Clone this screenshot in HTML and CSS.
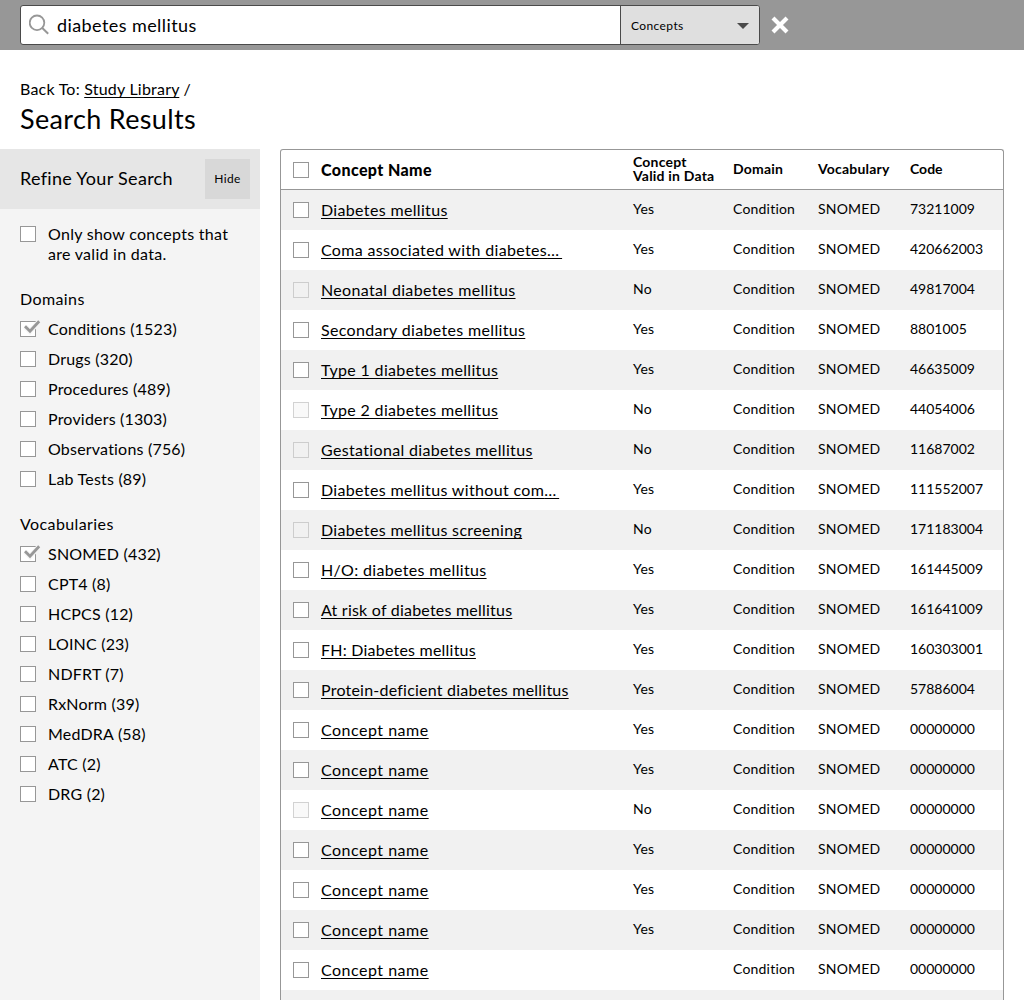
FILE: index.html
```html
<!DOCTYPE html>
<html lang="en">
<head>
<meta charset="utf-8">
<title>Search Results</title>
<link rel="stylesheet" href="styles.css">
</head>
<body>
<header class="topbar">
  <div class="search">
    <div class="field">
      <svg class="glass" width="22" height="22" viewBox="0 0 22 22"><circle cx="8" cy="8.8" r="7.3" fill="none" stroke="#979797" stroke-width="1.8"/><path d="M13 13.8L19.2 19.8" stroke="#979797" stroke-width="2"/></svg>
      <span class="query">diabetes mellitus</span>
    </div>
    <div class="scope"><span>Concepts</span><svg width="12" height="6" viewBox="0 0 12 6"><path d="M0 0H12L6 6Z" fill="#4a4a4a"/></svg></div>
  </div>
  <svg class="clear" width="18" height="18" viewBox="0 0 18 18"><path d="M2 2L16 16M16 2L2 16" stroke="#fff" stroke-width="4.2"/></svg>
</header>
<div class="heading">
  <div class="crumb">Back To: <a class="link">Study Library</a> /</div>
  <h1 class="title">Search Results</h1>
</div>
<div class="content">
  <aside class="sidebar">
    <div class="refine"><h2 class="refine-title">Refine Your Search</h2><div class="hide">Hide</div></div>
    <div class="filters">
      <div class="option two-line"><i class="box"></i><span class="valid-label">Only show concepts that<br>are valid in data.</span></div>
      <h3 class="group">Domains</h3>
      <div class="option"><i class="box"><svg class="tick" width="18" height="15" viewBox="0 0 18 15"><path d="M2 6.5L7 11.5L16 1.5" fill="none" stroke="#f4f4f4" stroke-width="5"/><path d="M2 6.3L7 11.2L16.2 1.3" fill="none" stroke="#979797" stroke-width="2.8"/></svg></i><span>Conditions (1523)</span></div>
      <div class="option"><i class="box"></i><span>Drugs (320)</span></div>
      <div class="option"><i class="box"></i><span>Procedures (489)</span></div>
      <div class="option"><i class="box"></i><span>Providers (1303)</span></div>
      <div class="option"><i class="box"></i><span>Observations (756)</span></div>
      <div class="option"><i class="box"></i><span>Lab Tests (89)</span></div>
      <h3 class="group second">Vocabularies</h3>
      <div class="option"><i class="box"><svg class="tick" width="18" height="15" viewBox="0 0 18 15"><path d="M2 6.5L7 11.5L16 1.5" fill="none" stroke="#f4f4f4" stroke-width="5"/><path d="M2 6.3L7 11.2L16.2 1.3" fill="none" stroke="#979797" stroke-width="2.8"/></svg></i><span>SNOMED (432)</span></div>
      <div class="option"><i class="box"></i><span>CPT4 (8)</span></div>
      <div class="option"><i class="box"></i><span>HCPCS (12)</span></div>
      <div class="option"><i class="box"></i><span>LOINC (23)</span></div>
      <div class="option"><i class="box"></i><span>NDFRT (7)</span></div>
      <div class="option"><i class="box"></i><span>RxNorm (39)</span></div>
      <div class="option"><i class="box"></i><span>MedDRA (58)</span></div>
      <div class="option"><i class="box"></i><span>ATC (2)</span></div>
      <div class="option"><i class="box"></i><span>DRG (2)</span></div>
    </div>
  </aside>
  <main class="table">
    <div class="row head"><i class="box"></i><b class="name">Concept Name</b><span class="stack">Concept<br>Valid in Data</span><span>Domain</span><span>Vocabulary</span><span>Code</span></div>
    <div class="row"><i class="box"></i><a class="name link">Diabetes mellitus</a><span>Yes</span><span>Condition</span><span>SNOMED</span><span>73211009</span></div>
    <div class="row"><i class="box"></i><a class="name link">Coma associated with diabetes<span class="dots">…</span></a><span>Yes</span><span>Condition</span><span>SNOMED</span><span>420662003</span></div>
    <div class="row"><i class="box off"></i><a class="name link">Neonatal diabetes mellitus</a><span>No</span><span>Condition</span><span>SNOMED</span><span>49817004</span></div>
    <div class="row"><i class="box"></i><a class="name link">Secondary diabetes mellitus</a><span>Yes</span><span>Condition</span><span>SNOMED</span><span>8801005</span></div>
    <div class="row"><i class="box"></i><a class="name link">Type 1 diabetes mellitus</a><span>Yes</span><span>Condition</span><span>SNOMED</span><span>46635009</span></div>
    <div class="row"><i class="box off"></i><a class="name link">Type 2 diabetes mellitus</a><span>No</span><span>Condition</span><span>SNOMED</span><span>44054006</span></div>
    <div class="row"><i class="box off"></i><a class="name link">Gestational diabetes mellitus</a><span>No</span><span>Condition</span><span>SNOMED</span><span>11687002</span></div>
    <div class="row"><i class="box"></i><a class="name link">Diabetes mellitus without com<span class="dots">…</span></a><span>Yes</span><span>Condition</span><span>SNOMED</span><span>111552007</span></div>
    <div class="row"><i class="box off"></i><a class="name link">Diabetes mellitus screening</a><span>No</span><span>Condition</span><span>SNOMED</span><span>171183004</span></div>
    <div class="row"><i class="box"></i><a class="name link">H/O: diabetes mellitus</a><span>Yes</span><span>Condition</span><span>SNOMED</span><span>161445009</span></div>
    <div class="row"><i class="box"></i><a class="name link tight">At risk of diabetes mellitus</a><span>Yes</span><span>Condition</span><span>SNOMED</span><span>161641009</span></div>
    <div class="row"><i class="box"></i><a class="name link tight">FH: Diabetes mellitus</a><span>Yes</span><span>Condition</span><span>SNOMED</span><span>160303001</span></div>
    <div class="row"><i class="box"></i><a class="name link tight">Protein-deficient diabetes mellitus</a><span>Yes</span><span>Condition</span><span>SNOMED</span><span>57886004</span></div>
    <div class="row"><i class="box"></i><a class="name link wide">Concept name</a><span>Yes</span><span>Condition</span><span>SNOMED</span><span>00000000</span></div>
    <div class="row"><i class="box"></i><a class="name link wide">Concept name</a><span>Yes</span><span>Condition</span><span>SNOMED</span><span>00000000</span></div>
    <div class="row"><i class="box off"></i><a class="name link wide">Concept name</a><span>No</span><span>Condition</span><span>SNOMED</span><span>00000000</span></div>
    <div class="row"><i class="box"></i><a class="name link wide">Concept name</a><span>Yes</span><span>Condition</span><span>SNOMED</span><span>00000000</span></div>
    <div class="row"><i class="box"></i><a class="name link wide">Concept name</a><span>Yes</span><span>Condition</span><span>SNOMED</span><span>00000000</span></div>
    <div class="row"><i class="box"></i><a class="name link wide">Concept name</a><span>Yes</span><span>Condition</span><span>SNOMED</span><span>00000000</span></div>
    <div class="row"><i class="box"></i><a class="name link wide">Concept name</a><span></span><span>Condition</span><span>SNOMED</span><span>00000000</span></div>
    <div class="row"></div>
  </main>
</div>
</body>
</html>
```
FILE: styles.css
```css
* { box-sizing: border-box; }
body {
  margin: 0;
  height: 1000px;
  overflow: hidden;
  display: flex;
  flex-direction: column;
  background: #fff;
  color: #000;
  font-family: Lato, "Liberation Sans", sans-serif;
  font-size: 16px;
  line-height: 20px;
  white-space: nowrap;
}
h1, h2, h3 { margin: 0; font-weight: 400; }

.topbar {
  flex: none;
  height: 50px;
  padding: 5px 20px;
  display: flex;
  background: #979797;
}
.search {
  width: 740px;
  height: 40px;
  display: flex;
  border: 1px solid #4a4a4a;
  border-radius: 3px;
  background: #fff;
  overflow: hidden;
}
.field { flex: 1; display: flex; align-items: center; padding-left: 8px; }
.glass { margin-right: 6px; }
.query { font-size: 18px; letter-spacing: 0.42px; }
.scope {
  width: 139px;
  display: flex;
  align-items: center;
  justify-content: space-between;
  padding: 2px 10px 0;
  border-left: 1px solid #4a4a4a;
  background: #dfdfdf;
  font-size: 12px;
  letter-spacing: 0.4px;
}
.clear { margin: 11px 0 0 11px; }

.heading { flex: none; height: 99px; padding: 29px 20px 0; }
.crumb { letter-spacing: 0.22px; }
.title { font-size: 27px; line-height: 36px; letter-spacing: 0.35px; padding-top: 2px; }
.link {
  text-decoration: underline;
  text-decoration-thickness: 1px;
  text-underline-offset: 2px;
  text-decoration-skip-ink: none;
}

.content { flex: 1; min-height: 0; display: flex; gap: 20px; }
.sidebar { width: 260px; background: #f4f4f4; }
.refine {
  height: 60px;
  padding: 0 10px 0 20px;
  display: flex;
  align-items: center;
  justify-content: space-between;
  background: #e6e6e6;
}
.refine-title { font-size: 18px; letter-spacing: 0.3px; padding-bottom: 2px; }
.hide {
  width: 45px;
  height: 40px;
  line-height: 40px;
  text-align: center;
  background: #d8d8d8;
  font-size: 12px;
  letter-spacing: 0.4px;
}
.filters { padding: 15px 20px; }
.option { height: 30px; display: flex; align-items: center; gap: 12px; letter-spacing: 0.2px; }
.option span { padding-bottom: 1px; }
.two-line { height: 50px; align-items: flex-start; }
.two-line .box { margin-top: 2px; }
.option .valid-label { letter-spacing: 0.28px; }
.group { font-size: 16px; height: 20px; margin: 15px 0 5px; letter-spacing: 0.4px; }
.group.second { margin-top: 20px; }
.box {
  flex: none;
  position: relative;
  width: 16px;
  height: 16px;
  border: 1px solid #979797;
  background: #fff;
}
.box.off { border-color: #d2d2d2; background: #f9f9f9; }
.row:nth-child(even) .off { border-color: #cdcdcd; background: #f1f1f1; }
.tick { position: absolute; left: 2px; top: -2px; }

.table {
  width: 724px;
  border: 1px solid #979797;
  border-bottom: 0;
  border-radius: 3px 3px 0 0;
  overflow: hidden;
}
.row {
  height: 40px;
  display: grid;
  grid-template-columns: 28px 312px 100px 85px 92px 1fr;
  align-items: center;
  padding-left: 12px;
  font-size: 14px;
  letter-spacing: 0.2px;
}
.row:nth-child(even) { background: #f1f1f1; }
.row > span { padding-bottom: 2px; }
.row > span:last-child { letter-spacing: 0; }
.name { font-size: 16px; letter-spacing: 0.34px; padding-bottom: 1px; }
.name.tight { letter-spacing: 0.22px; }
.name.wide { letter-spacing: 0.5px; }
.dots { letter-spacing: 3px; }
.head { border-bottom: 1px solid #979797; font-weight: 700; }
.head .name { letter-spacing: 0.4px; padding: 1px 0 0; }
.head > span { padding-bottom: 1px; }
.head .stack { line-height: 14px; }
```
